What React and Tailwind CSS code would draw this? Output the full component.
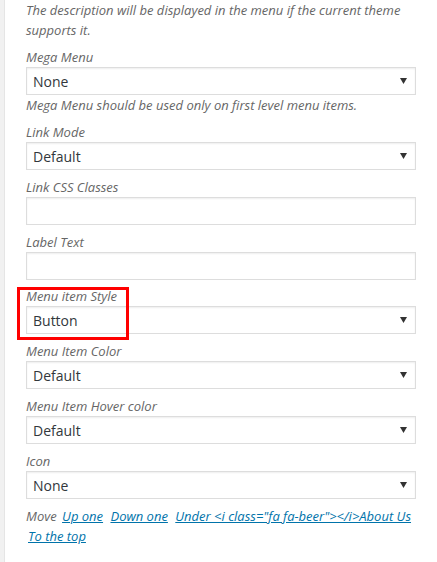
import React from "react";

const Arrow = () => (
  <svg width="7" height="6" viewBox="0 0 7 6" className="shrink-0">
    <polygon points="0,0 7,0 3.5,6" fill="#333" />
  </svg>
);

const Select = ({ value }) => (
  <div className="h-[28px] border border-[#dddddd] bg-white shadow-[inset_0_1px_2px_rgba(0,0,0,0.07)] flex items-center justify-between pl-[6px] pr-[8px]">
    <span className="not-italic text-[14px] text-[#32373c] leading-none translate-y-[1px]">{value}</span>
    <Arrow />
  </div>
);

const Input = () => (
  <div className="h-[28px] border border-[#dddddd] bg-white shadow-[inset_0_1px_2px_rgba(0,0,0,0.07)]" />
);

const Label = ({ children }) => (
  <div className="italic text-[13px] leading-[20px] text-[#666]">{children}</div>
);

export default function App() {
  return (
    <div className="w-[437px] h-[562px] bg-white flex" style={{ fontFamily: '"Open Sans", sans-serif' }}>
      <div className="w-[4px] bg-[#f1f1f1] border-r border-[#e5e5e5] shrink-0 box-content" />
      <div className="flex-1 px-[21px] flex flex-col">
        <p className="italic text-[13px] leading-[20px] text-[#666]">
          The description will be displayed in the menu if the current theme supports it.
        </p>

        <div className="mt-[7px]">
          <Label>Mega Menu</Label>
          <Select value="None" />
          <div className="italic text-[13px] leading-[20px] text-[#666]">
            Mega Menu should be used only on first level menu items.
          </div>
        </div>

        <div className="mt-[7px]">
          <Label>Link Mode</Label>
          <Select value="Default" />
        </div>

        <div className="mt-[7px]">
          <Label>Link CSS Classes</Label>
          <Input />
        </div>

        <div className="mt-[7px]">
          <Label>Label Text</Label>
          <Input />
        </div>

        <div className="mt-[6px] relative">
          <Label>Menu item Style</Label>
          <Select value="Button" />
          <div className="absolute top-[1px] left-[-9px] w-[112px] h-[53px] border-[3px] border-[#ff0000] pointer-events-none" />
        </div>

        <div className="mt-[7px]">
          <Label>Menu Item Color</Label>
          <Select value="Default" />
        </div>

        <div className="mt-[7px]">
          <Label>Menu Item Hover color</Label>
          <Select value="Default" />
        </div>

        <div className="mt-[7px]">
          <Label>Icon</Label>
          <Select value="None" />
        </div>

        <div className="mt-[7px] italic text-[13px] leading-[20px] text-[#666]">
          Move{" "}
          <a href="#" className="text-[#0073aa] underline mx-[2px]">Up one</a>{" "}
          <a href="#" className="text-[#0073aa] underline mx-[2px]">Down one</a>{" "}
          <a href="#" className="text-[#0073aa] underline mx-[2px]">Under &lt;i class="fa fa-beer"&gt;&lt;/i&gt;About Us</a>{" "}
          <a href="#" className="text-[#0073aa] underline mx-[2px]">To the top</a>
        </div>
      </div>
    </div>
  );
}
